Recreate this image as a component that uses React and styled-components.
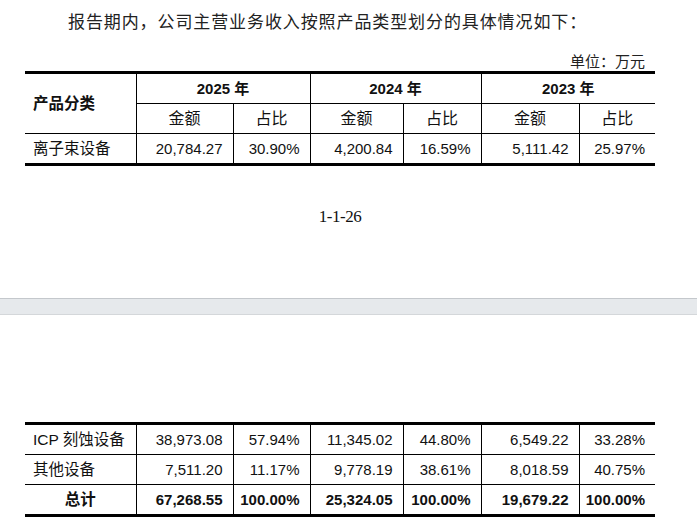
import React from 'react';
import styled, { createGlobalStyle } from 'styled-components';

const GlobalStyle = createGlobalStyle`
  html, body {
    margin: 0;
    padding: 0;
    background: #fff;
  }
  body {
    font-family: "Liberation Sans", "Noto Sans CJK SC", sans-serif;
    color: #000;
  }
`;

const Page = styled.div`
  width: 697px;
  padding-top: 9px;
`;

const Sheet = styled.div`
  width: 630px;
  margin-left: 25px;
`;

const Intro = styled.p`
  margin: 0;
  padding-left: 43px;
  font-family: "Noto Sans CJK SC", sans-serif;
  font-size: 17px;
  line-height: 24px;
  letter-spacing: 0.9px;
  color: #222;
  white-space: nowrap;
`;

const Unit = styled.div`
  margin-top: 18px;
  padding-right: 10px;
  text-align: right;
  font-family: "Noto Sans CJK SC", sans-serif;
  font-size: 15px;
  line-height: 20px;
  color: #222;
`;

const Table = styled.table`
  width: 630px;
  margin-top: ${p => p.$top || 0}px;
  border-collapse: collapse;
  table-layout: fixed;
  border-top: 3px solid #000;
  border-bottom: 3px solid #000;
`;

const Cell = styled.td`
  height: 29px;
  padding: 0 ${p => (p.$align === 'right' ? '10px' : '0')} 0 ${p => (p.$align === 'left' ? '8px' : '0')};
  border-top: 1px solid #000;
  border-left: ${p => (p.$first ? 'none' : '1px solid #000')};
  text-align: ${p => p.$align || 'center'};
  font-weight: ${p => (p.$bold ? 700 : 400)};
  font-size: ${p => p.$size || 15}px;
  line-height: 18px;
  color: #111;
  white-space: nowrap;
  vertical-align: middle;
`;

const PageNumber = styled.div`
  margin-top: 41px;
  text-align: center;
  font-family: "Liberation Serif", serif;
  font-size: 17px;
  line-height: 20px;
  letter-spacing: -0.5px;
  color: #111;
`;

const PageGap = styled.div`
  margin-top: 71px;
  height: 15px;
  background: #e6e9ec;
  border-top: 1px solid #c4c8cc;
  border-bottom: 1px solid #d4d7da;
`;

const widths = [111, 97, 77, 93, 78, 98, 76];

const Cols = () => (
  <colgroup>
    {widths.map((w, i) => (
      <col key={i} style={{ width: w }} />
    ))}
  </colgroup>
);

const DataRow = ({ label, values, total }) => (
  <tr>
    <Cell $first $align={total ? 'center' : 'left'} $bold={total} $size={15.5}>
      {label}
    </Cell>
    {values.map((v, i) => (
      <Cell key={i} $align="right" $bold={total}>
        {v}
      </Cell>
    ))}
  </tr>
);

const years = ['2025 年', '2024 年', '2023 年'];

const App = () => (
  <Page>
    <GlobalStyle />
    <Sheet>
      <Intro>报告期内，公司主营业务收入按照产品类型划分的具体情况如下：</Intro>
      <Unit>单位：万元</Unit>
      <Table>
        <Cols />
        <tbody>
          <tr>
            <Cell $first rowSpan={2} $align="left" $bold $size={15.5}>
              产品分类
            </Cell>
            {years.map(y => (
              <Cell key={y} colSpan={2} $bold>
                {y}
              </Cell>
            ))}
          </tr>
          <tr>
            {years.map(y => (
              <React.Fragment key={y}>
                <Cell $size={16}>金额</Cell>
                <Cell $size={16}>占比</Cell>
              </React.Fragment>
            ))}
          </tr>
          <DataRow
            label="离子束设备"
            values={['20,784.27', '30.90%', '4,200.84', '16.59%', '5,111.42', '25.97%']}
          />
        </tbody>
      </Table>
      <PageNumber>1-1-26</PageNumber>
    </Sheet>
    <PageGap />
    <Sheet>
      <Table $top={107}>
        <Cols />
        <tbody>
          <DataRow
            label="ICP 刻蚀设备"
            values={['38,973.08', '57.94%', '11,345.02', '44.80%', '6,549.22', '33.28%']}
          />
          <DataRow
            label="其他设备"
            values={['7,511.20', '11.17%', '9,778.19', '38.61%', '8,018.59', '40.75%']}
          />
          <DataRow
            label="总计"
            total
            values={['67,268.55', '100.00%', '25,324.05', '100.00%', '19,679.22', '100.00%']}
          />
        </tbody>
      </Table>
    </Sheet>
  </Page>
);

export default App;
